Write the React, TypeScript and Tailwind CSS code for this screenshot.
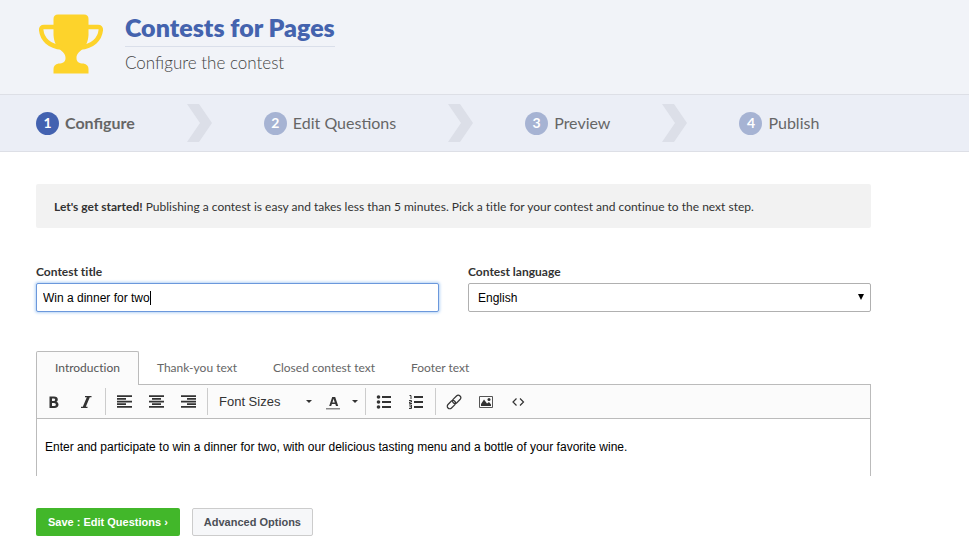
import { ReactNode, useState } from 'react'

const steps = ['Configure', 'Edit Questions', 'Preview', 'Publish']
const tabs = ['Introduction', 'Thank-you text', 'Closed contest text', 'Footer text']
const defaultTitle = 'Win a dinner for two'

function Trophy() {
  return (
    <svg width="64" height="60" viewBox="0 0 64 60" aria-hidden="true" className="shrink-0">
      <path
        d="M19 0.5H45Q49.500 0.500 49.500 5V21C49 28 47 32 43 35.500C39 39 37.500 40.500 37.500 44C37.500 48 40 49.500 44.500 49.500Q49.500 50.500 49.500 55V59.500H14.500V55Q14.500 50.500 19.500 49.500C24 49.500 26.500 48 26.500 44C26.500 40.500 25 39 21 35.500C17 32 15 28 14.500 21V5Q14.500 0.500 19 0.500Z"
        fill="#fdd32b"
      />
      <path
        d="M16 13H5Q2 13 2.200 16C3 25 10 32.500 23 33.500M48 13H59Q62 13 61.800 16C61 25 54 32.500 41 33.500"
        fill="none"
        stroke="#fdd32b"
        strokeWidth="4.500"
      />
    </svg>
  )
}

function StepArrow() {
  return (
    <svg width="25" height="38" viewBox="0 0 25 38" aria-hidden="true" className="shrink-0">
      <path d="M0 0H12L25 19L12 38H0L13 19Z" fill="#dcdfe8" />
    </svg>
  )
}

function Caret() {
  return (
    <svg width="6" height="3" viewBox="0 0 6 3" aria-hidden="true" className="pointer-events-none">
      <path d="M0 0H6L3 3Z" fill="#333" />
    </svg>
  )
}

function Icon({ children }: { children: ReactNode }) {
  return (
    <svg width="16" height="16" viewBox="0 0 16 16" fill="#333" aria-hidden="true">
      {children}
    </svg>
  )
}

function AlignIcon({ d }: { d: string }) {
  return (
    <svg width="15" height="13" viewBox="0 0 15 13" fill="#333" aria-hidden="true">
      <path d={d} />
    </svg>
  )
}

function ToolButton({ label, children }: { label: string; children: ReactNode }) {
  return (
    <button type="button" aria-label={label} className="flex h-7 w-8 items-center justify-center">
      {children}
    </button>
  )
}

function ToolGroup({ children }: { children: ReactNode }) {
  return (
    <div className="flex h-[27px] items-center border-l border-[#ccc] pr-[3px] pl-0.5 first:border-transparent first:pl-0">
      {children}
    </div>
  )
}

function Toolbar() {
  return (
    <div role="toolbar" aria-label="Formatting" className="flex h-[34px] items-center border-b border-[#bbb] bg-[#fbfbfb]">
      <ToolGroup>
        <ToolButton label="Bold">
          <Icon>
            <path
              fillRule="evenodd"
              d="M3.500 2.500H8C10.500 2.500 11.800 3.600 11.800 5.400Q11.800 7 10.500 7.700Q12.500 8.400 12.500 10.600C12.500 12.700 11 14 8.500 14H3.500ZM6 4.500V7H7.600Q9.200 7 9.200 5.700Q9.200 4.500 7.600 4.500ZM6 9V12H8Q9.900 12 9.900 10.500Q9.900 9 8 9Z"
            />
          </Icon>
        </ToolButton>
        <ToolButton label="Italic">
          <Icon>
            <path d="M7 2H13.500V3.200H11.800L7.800 12.800H9.500V14H3V12.800H4.800L8.800 3.200H7Z" />
          </Icon>
        </ToolButton>
      </ToolGroup>

      <ToolGroup>
        <ToolButton label="Align left">
          <AlignIcon d="M0 0.300h15v1.700H0zM0 3h9v1.700H0zM0 5.700h15v1.700H0zM0 8.300h9v1.700H0zM0 11h15v1.700H0z" />
        </ToolButton>
        <ToolButton label="Align center">
          <AlignIcon d="M0 0.300h15v1.700H0zM3 3h9v1.700H3zM0 5.700h15v1.700H0zM3 8.300h9v1.700H3zM0 11h15v1.700H0z" />
        </ToolButton>
        <ToolButton label="Align right">
          <AlignIcon d="M0 0.300h15v1.700H0zM6 3h9v1.700H6zM0 5.700h15v1.700H0zM6 8.300h9v1.700H6zM0 11h15v1.700H0z" />
        </ToolButton>
      </ToolGroup>

      <ToolGroup>
        <div className="flex w-[108px] items-center">
          <select
            aria-label="Font sizes"
            className="-mr-3 h-7 w-full appearance-none bg-transparent pl-[9px] font-['Liberation_Sans',sans-serif] text-[13px] text-[#333] outline-none"
          >
            <option>Font Sizes</option>
          </select>
          <Caret />
        </div>
        <button type="button" aria-label="Text color" className="flex h-7 w-11 items-center gap-3 pl-2">
          <svg width="14" height="16" viewBox="0 0 14 16" aria-hidden="true">
            <path
              fillRule="evenodd"
              fill="#333"
              d="M6.200 3H9.200L12.200 12H10L9.300 10H5.900L5.200 12H3.200ZM7.600 4.800L6.400 8.500H8.800Z"
            />
            <path d="M0 14h14v1.500H0z" fill="#888" />
          </svg>
          <Caret />
        </button>
      </ToolGroup>

      <ToolGroup>
        <ToolButton label="Bullet list">
          <Icon>
            <circle cx="2.500" cy="3" r="1.800" />
            <circle cx="2.500" cy="8" r="1.800" />
            <circle cx="2.500" cy="13" r="1.800" />
            <path d="M6 2h9v2H6zM6 7h9v2H6zM6 12h9v2H6z" />
          </Icon>
        </ToolButton>
        <ToolButton label="Numbered list">
          <Icon>
            <path d="M6 2h9v2H6zM6 7h9v2H6zM6 12h9v2H6z" />
            <path
              d="M1.500 1.500H3V5M1 6.500H3.500V8H1.500V9.500H4M1 11H3.500V12.800H1.500M3.500 12.800V14.500H1"
              fill="none"
              stroke="#333"
            />
          </Icon>
        </ToolButton>
      </ToolGroup>

      <ToolGroup>
        <ToolButton label="Insert link">
          <Icon>
            <g transform="rotate(-45 8 8)" fill="none" stroke="#333" strokeWidth="1.200">
              <rect x="-0.500" y="5.500" width="9.500" height="5" rx="2.500" />
              <rect x="7" y="5.500" width="9.500" height="5" rx="2.500" />
            </g>
          </Icon>
        </ToolButton>
        <ToolButton label="Insert image">
          <Icon>
            <path d="M1.500 2.500H14.500V13.500H1.500Z" fill="none" stroke="#555" />
            <path d="M3 12V10L6 5.500L9 9.500L11 8L13 10.500V12Z" />
            <circle cx="11" cy="5.500" r="1.500" />
          </Icon>
        </ToolButton>
        <ToolButton label="Source code">
          <Icon>
            <path d="M6.500 4.500L3 8L6.500 11.500M10 4.500L13.500 8L10 11.500" fill="none" stroke="#333" strokeWidth="1.200" />
          </Icon>
        </ToolButton>
      </ToolGroup>
    </div>
  )
}

export default function App() {
  const [title, setTitle] = useState(defaultTitle)
  const [tab, setTab] = useState(0)

  return (
    <div className="bg-white font-['Lato',sans-serif] text-xs text-[#333]">
      <header className="flex h-[95px] items-start gap-[22px] border-b border-[#dddfe6] bg-[#f1f3f8] pt-3.5 pl-[39px]">
        <Trophy />
        <div className="-mt-[3px]">
          <h1 className="border-b border-[#dadfea] pb-[3px] text-[25px] leading-8 font-extrabold text-[#4463ae]">
            Contests for Pages
          </h1>
          <p className="text-[17px] leading-8 font-light text-[#444]">Configure the contest</p>
        </div>
      </header>

      <nav aria-label="Steps" className="border-b border-[#dddfe6] bg-[#ebeef6] px-9">
        <ol className="flex h-14 items-center gap-[52px]">
          {steps.map((step, i) => (
            <li key={step} className="flex items-center gap-[52px]">
              <a
                href="#"
                aria-current={i === 0 ? 'step' : undefined}
                className={`flex items-center gap-1.5 text-base text-[#666] ${i === 0 ? 'font-bold' : ''}`}
              >
                <span
                  className={`flex size-[23px] items-center justify-center rounded-full text-sm font-bold text-white ${
                    i === 0 ? 'bg-[#4362b0]' : 'bg-[#a6b3d3]'
                  }`}
                >
                  {i + 1}
                </span>
                {step}
              </a>
              {i < steps.length - 1 && <StepArrow />}
            </li>
          ))}
        </ol>
      </nav>

      <main className="max-w-[907px] px-9 py-8 [font-variant-ligatures:none]">
        <p className="rounded-xs bg-[#f2f2f2] px-[18px] pt-[15px] pb-[13px] leading-4">
          <strong>Let's get started!</strong> Publishing a contest is easy and takes less than 5 minutes. Pick a title
          for your contest and continue to the next step.
        </p>

        <form className="mt-9" onSubmit={(e) => e.preventDefault()}>
          <div className="grid grid-cols-2 gap-[29px]">
            <div>
              <label htmlFor="title" className="mb-[3px] block leading-4 font-bold">
                Contest title
              </label>
              <div className="relative">
                <input
                  id="title"
                  type="text"
                  autoFocus
                  value={title}
                  onChange={(e) => setTitle(e.target.value)}
                  className="block h-[29px] w-full rounded-xs border border-[#6b98dc] bg-white px-1.5 font-['Liberation_Sans',sans-serif] text-black shadow-[0_0_3px_1px_#b5d3f5] outline-none"
                />
                {/* insertion point, until the title is edited */}
                {title === defaultTitle && (
                  <span className="pointer-events-none absolute top-2 left-[114px] h-3.5 w-px bg-black" />
                )}
              </div>
            </div>
            <div>
              <label htmlFor="language" className="mb-[3px] block leading-4 font-bold">
                Contest language
              </label>
              <div className="relative">
                <select
                  id="language"
                  className="block h-[29px] w-full appearance-none rounded-xs border border-[#b0b0b0] bg-white px-[9px] font-['Liberation_Sans',sans-serif] text-black"
                >
                  <option>English</option>
                </select>
                <svg
                  width="6"
                  height="6"
                  viewBox="0 0 6 6"
                  aria-hidden="true"
                  className="pointer-events-none absolute top-[11px] right-[7px]"
                >
                  <path d="M0 0H6L3 6Z" fill="#000" />
                </svg>
              </div>
            </div>
          </div>

          <div role="tablist" className="mt-[39px] flex">
            {tabs.map((name, i) => (
              <button
                key={name}
                type="button"
                role="tab"
                aria-selected={i === tab}
                onClick={() => setTab(i)}
                className={`h-[34px] px-[18px] leading-4 ${
                  i === tab
                    ? 'rounded-t-xs border-x border-t border-[#bbb] bg-[#fbfbfb] pb-px text-[#555]'
                    : 'border-b border-[#bbb] text-[#666]'
                }`}
              >
                {name}
              </button>
            ))}
            <div className="grow border-b border-[#bbb]" />
          </div>
          <div role="tabpanel" className="border-x border-[#bbb]">
            <Toolbar />
            <div
              role="textbox"
              aria-label="Introduction"
              contentEditable
              suppressContentEditableWarning
              className="px-2 pt-5 pb-[21px] font-['Liberation_Sans',sans-serif] leading-4 text-black outline-none"
            >
              Enter and participate to win a dinner for two, with our delicious tasting menu and a bottle of your
              favorite wine.
            </div>
          </div>

          <div className="mt-8 flex gap-3 font-['Liberation_Sans',sans-serif] text-[11px] font-bold">
            <button type="submit" className="h-7 rounded-xs bg-[#42b72a] px-3 text-white">
              Save : Edit Questions ›
            </button>
            <button type="button" className="h-7 rounded-xs border border-[#ccc] bg-[#f6f7f9] px-[11px] text-[#4b4f56]">
              Advanced Options
            </button>
          </div>
        </form>
      </main>
    </div>
  )
}
